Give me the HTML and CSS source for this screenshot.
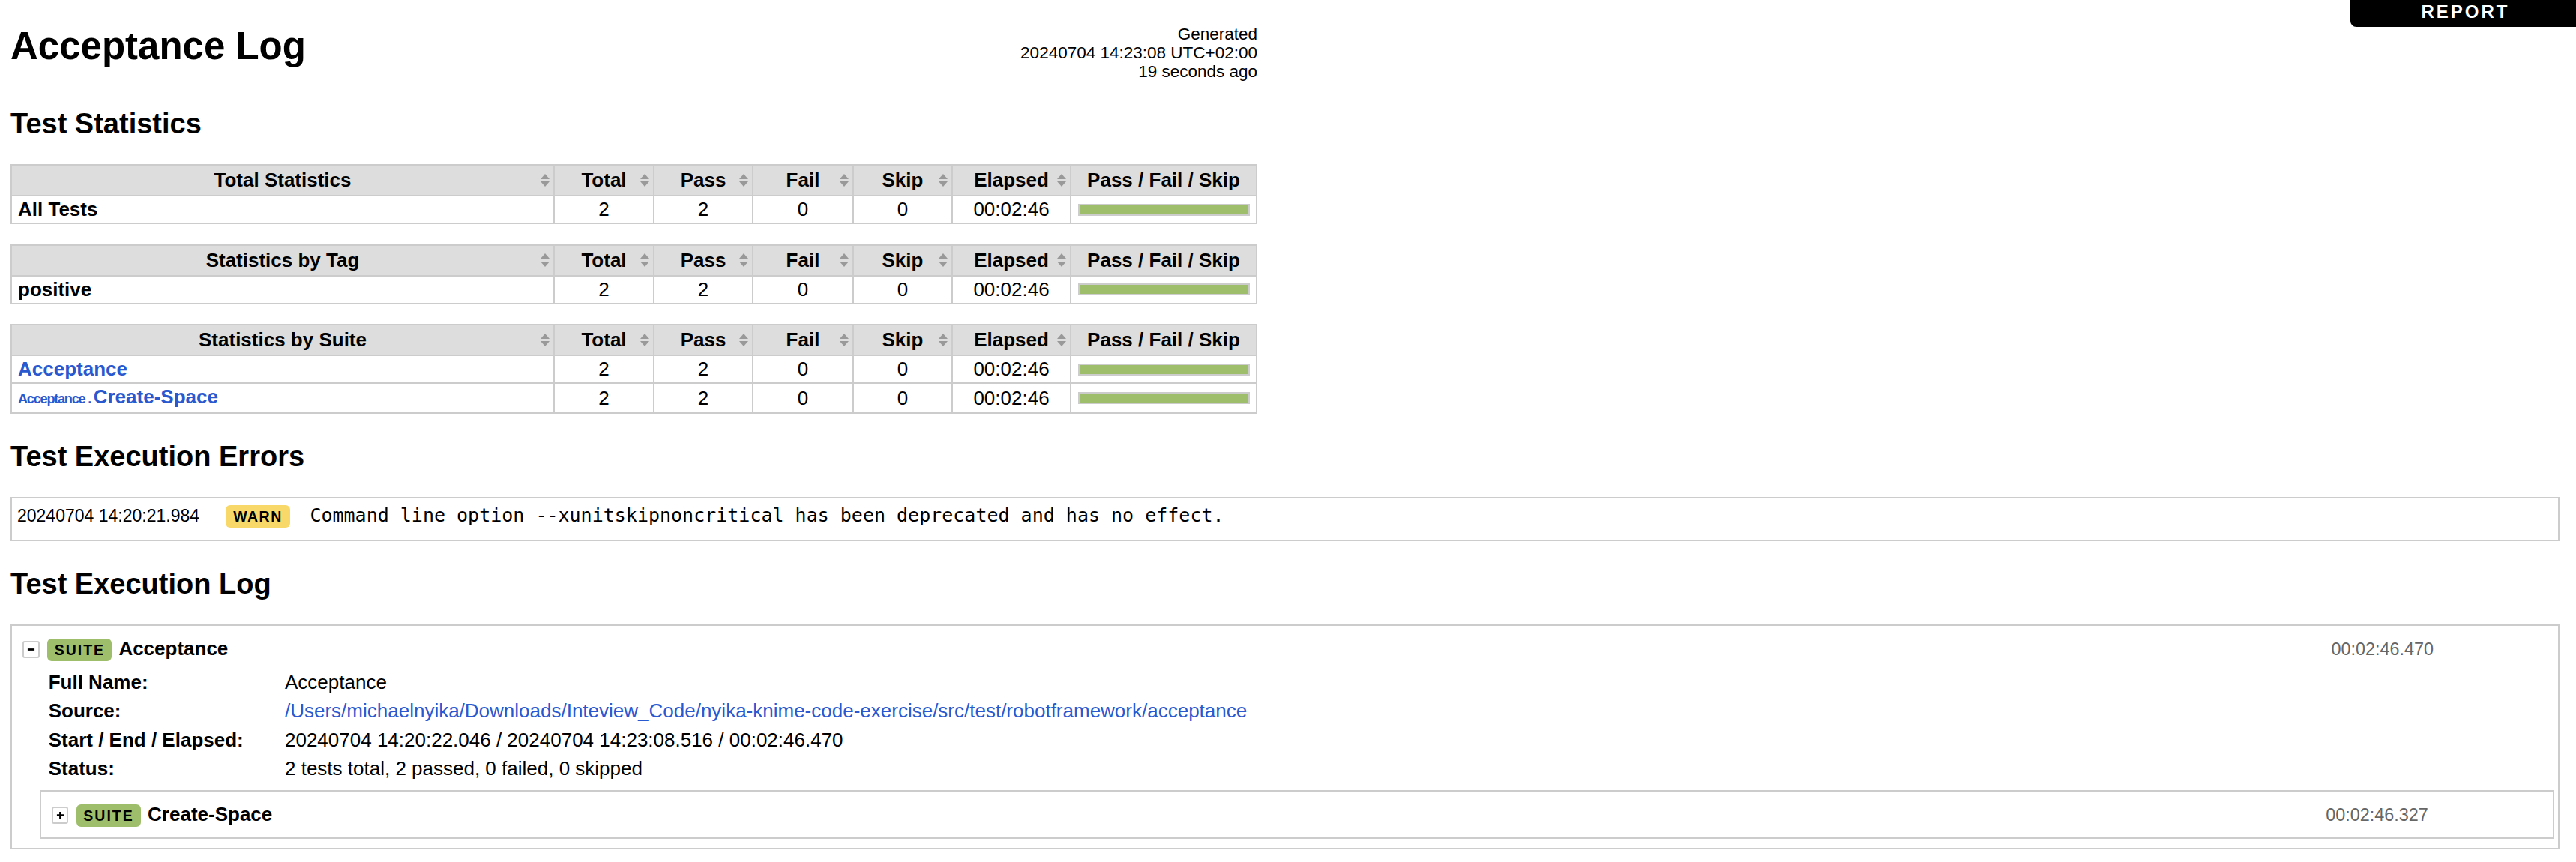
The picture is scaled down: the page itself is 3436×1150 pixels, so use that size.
FILE: index.html
```html
<!DOCTYPE html>
<html lang="en">
<head>
<meta charset="utf-8">
<title>Acceptance Log</title>
<link rel="stylesheet" href="styles.css">
</head>
<body>
<div class="top-right-header"><a class="report-link" href="#">REPORT</a></div>
<div class="page">
  <div class="header">
    <h1 class="title">Acceptance Log</h1>
    <div class="generated">Generated<br>20240704 14:23:08 UTC+02:00<br>19 seconds ago</div>
  </div>

  <h2 class="section-title">Test Statistics</h2>
  <div class="stats">
    <table class="stat-table">
      <colgroup><col class="c-name"><col class="c-total"><col class="c-pass"><col class="c-fail"><col class="c-skip"><col class="c-elapsed"><col class="c-graph"></colgroup>
      <thead>
        <tr><th class="sortable">Total Statistics</th><th class="sortable">Total</th><th class="sortable">Pass</th><th class="sortable">Fail</th><th class="sortable">Skip</th><th class="sortable">Elapsed</th><th>Pass / Fail / Skip</th></tr>
      </thead>
      <tbody>
        <tr><td class="name">All Tests</td><td>2</td><td>2</td><td>0</td><td>0</td><td>00:02:46</td><td class="graph-cell"><div class="graph"><div class="pass-bar"></div></div></td></tr>
      </tbody>
    </table>
    <table class="stat-table">
      <colgroup><col class="c-name"><col class="c-total"><col class="c-pass"><col class="c-fail"><col class="c-skip"><col class="c-elapsed"><col class="c-graph"></colgroup>
      <thead>
        <tr><th class="sortable">Statistics by Tag</th><th class="sortable">Total</th><th class="sortable">Pass</th><th class="sortable">Fail</th><th class="sortable">Skip</th><th class="sortable">Elapsed</th><th>Pass / Fail / Skip</th></tr>
      </thead>
      <tbody>
        <tr><td class="name">positive</td><td>2</td><td>2</td><td>0</td><td>0</td><td>00:02:46</td><td class="graph-cell"><div class="graph"><div class="pass-bar"></div></div></td></tr>
      </tbody>
    </table>
    <table class="stat-table">
      <colgroup><col class="c-name"><col class="c-total"><col class="c-pass"><col class="c-fail"><col class="c-skip"><col class="c-elapsed"><col class="c-graph"></colgroup>
      <thead>
        <tr><th class="sortable">Statistics by Suite</th><th class="sortable">Total</th><th class="sortable">Pass</th><th class="sortable">Fail</th><th class="sortable">Skip</th><th class="sortable">Elapsed</th><th>Pass / Fail / Skip</th></tr>
      </thead>
      <tbody>
        <tr><td class="name"><a href="#">Acceptance</a></td><td>2</td><td>2</td><td>0</td><td>0</td><td>00:02:46</td><td class="graph-cell"><div class="graph"><div class="pass-bar"></div></div></td></tr>
        <tr><td class="name"><a href="#"><span class="parent-name">Acceptance . </span>Create-Space</a></td><td>2</td><td>2</td><td>0</td><td>0</td><td>00:02:46</td><td class="graph-cell"><div class="graph"><div class="pass-bar"></div></div></td></tr>
      </tbody>
    </table>
  </div>

  <h2 class="section-title">Test Execution Errors</h2>
  <div class="errors">
    <span class="err-time">20240704 14:20:21.984</span>
    <span class="label warn">WARN</span>
    <span class="err-msg">Command line option --xunitskipnoncritical has been deprecated and has no effect.</span>
  </div>

  <h2 class="section-title">Test Execution Log</h2>
  <div class="suite">
    <div class="element-header">
      <span class="toggle"><svg viewBox="0 0 12 12" width="12" height="12"><path d="M1 6h10" stroke="#000" stroke-width="3"/></svg></span>
      <span class="label suite-label">SUITE</span>
      <span class="element-name">Acceptance</span>
      <span class="elapsed">00:02:46.470</span>
    </div>
    <table class="metadata">
      <tr><th>Full Name:</th><td>Acceptance</td></tr>
      <tr><th>Source:</th><td><a href="#">/Users/michaelnyika/Downloads/Inteview_Code/nyika-knime-code-exercise/src/test/robotframework/acceptance</a></td></tr>
      <tr><th>Start / End / Elapsed:</th><td>20240704 14:20:22.046 / 20240704 14:23:08.516 / 00:02:46.470</td></tr>
      <tr><th>Status:</th><td>2 tests total, 2 passed, 0 failed, 0 skipped</td></tr>
    </table>
    <div class="suite child">
      <div class="element-header">
        <span class="toggle"><svg viewBox="0 0 12 12" width="12" height="12"><path d="M1 6h10M6 1v10" stroke="#000" stroke-width="3"/></svg></span>
        <span class="label suite-label">SUITE</span>
        <span class="element-name">Create-Space</span>
        <span class="elapsed">00:02:46.327</span>
      </div>
    </div>
  </div>
</div>
</body>
</html>
```
FILE: styles.css
```css
html, body {
  margin: 0;
  padding: 0;
}
body {
  font-family: "Liberation Sans", Helvetica, Arial, sans-serif;
  font-size: 26px;
  color: #000;
  background: #fff;
}
a {
  color: #2a59cf;
  text-decoration: none;
}

/* Report link tab */
.top-right-header {
  position: fixed;
  top: 0;
  right: 0;
  width: 301px;
  text-align: center;
  z-index: 10;
}
.report-link {
  display: block;
  background: #000;
  color: #fff;
  font-weight: bold;
  font-size: 24px;
  letter-spacing: 3px;
  line-height: 28px;
  padding: 2px 0 6px 6px;
  border-bottom-left-radius: 8px;
}

.page {
  display: flex;
  flex-direction: column;
  padding: 0 22px 0 14px;
}

/* Header */
.header {
  display: flex;
  justify-content: space-between;
  align-items: flex-start;
  width: 1663px;
  padding-top: 32.3px;
}
.title {
  margin: 0;
  font-size: 51px;
  line-height: 60px;
  font-weight: bold;
}
.generated {
  margin-top: 1.2px;
  font-size: 22.5px;
  line-height: 25px;
  text-align: right;
  white-space: nowrap;
}

.section-title {
  margin: 34.8px 0 32.2px;
  font-size: 38px;
  line-height: 44px;
  font-weight: bold;
}

/* Statistics tables */
.stat-table {
  width: 1663px;
  border-collapse: collapse;
  table-layout: fixed;
}
.stat-table + .stat-table {
  margin-top: 26.5px;
}
.c-total { width: 133px; }
.c-pass { width: 132px; }
.c-fail { width: 134px; }
.c-skip { width: 132px; }
.c-elapsed { width: 158px; }
.c-graph { width: 248px; }

.stat-table th,
.stat-table td {
  border: 2px solid #ccc;
}
.stat-table th {
  position: relative;
  background: #ddd;
  font-weight: bold;
  text-align: center;
  line-height: 29px;
  padding: 5px 4px;
  white-space: nowrap;
}
.stat-table th.sortable::before,
.stat-table th.sortable::after {
  content: "";
  position: absolute;
  right: 5px;
  width: 0;
  height: 0;
  border-left: 6.5px solid transparent;
  border-right: 6.5px solid transparent;
}
.stat-table th.sortable::before {
  top: calc(50% - 9px);
  border-bottom: 7.5px solid #999;
}
.stat-table th.sortable::after {
  top: calc(50% + 1.5px);
  border-top: 7.5px solid #999;
}
.stat-table td {
  line-height: 29px;
  padding: 3px 4px;
  text-align: center;
  white-space: nowrap;
}
.stat-table td.name {
  text-align: left;
  padding-left: 8px;
  font-weight: bold;
}
.parent-name {
  font-size: 0.7em;
  letter-spacing: -0.07em;
}
.stat-table td.graph-cell {
  padding: 0;
}
.graph {
  width: 229px;
  height: 16px;
  box-sizing: border-box;
  margin: 0 auto;
  border: 2px solid #ccc;
  background: #fff;
}
.pass-bar {
  width: 100%;
  height: 100%;
  background: #9fbe6c;
}

/* Errors */
.errors {
  display: flex;
  align-items: baseline;
  height: 47px;
  padding: 8px 7px 0;
  border: 2px solid #ccc;
}
.err-time {
  flex: none;
  width: 278px;
  font-size: 23px;
  line-height: 26px;
}
.label {
  display: inline-block;
  flex: none;
  min-width: 86px;
  box-sizing: border-box;
  text-align: center;
  font-weight: bold;
  font-size: 19.5px;
  line-height: 22px;
  letter-spacing: 1.5px;
  padding: 4px 9px;
  border-radius: 6px;
  color: #000;
}
.label.warn {
  background: #f8d868;
}
.label.suite-label {
  background: #9fbe6c;
  letter-spacing: 2px;
}
.err-msg {
  margin-left: 26.4px;
  font-family: "DejaVu Sans Mono", "Liberation Mono", monospace;
  font-size: 25px;
  line-height: 30px;
  white-space: pre;
}

/* Execution log */
.suite {
  border: 2px solid #ccc;
  padding: 7.8px 5.2px;
}
.suite.child {
  margin: 9.3px 0 4.2px 31.5px;
}
.element-header {
  display: flex;
  align-items: center;
  padding: 8.5px 9px 6px;
}
.toggle {
  flex: none;
  width: 22.5px;
  height: 22.5px;
  box-sizing: border-box;
  border: 2px solid #ccc;
  border-radius: 3px;
  display: flex;
  align-items: center;
  justify-content: center;
  background: #fff;
}
.toggle svg {
  display: block;
  width: 11px;
  height: 11px;
}
.element-header .label {
  margin-left: 10.7px;
}
.element-name {
  margin: -4px 0 0 9px;
  font-weight: bold;
  font-size: 26px;
  line-height: 30px;
}
.elapsed {
  margin: -2px 151.8px 0 auto;
  font-size: 23.4px;
  line-height: 30px;
  color: #666;
}
.metadata {
  margin: 3.4px 0 0 43.5px;
  border-collapse: collapse;
}
.metadata th,
.metadata td {
  padding: 4.75px 0;
  line-height: 29px;
  vertical-align: top;
  text-align: left;
  white-space: nowrap;
}
.metadata th {
  width: 315.3px;
  font-weight: bold;
}
```
